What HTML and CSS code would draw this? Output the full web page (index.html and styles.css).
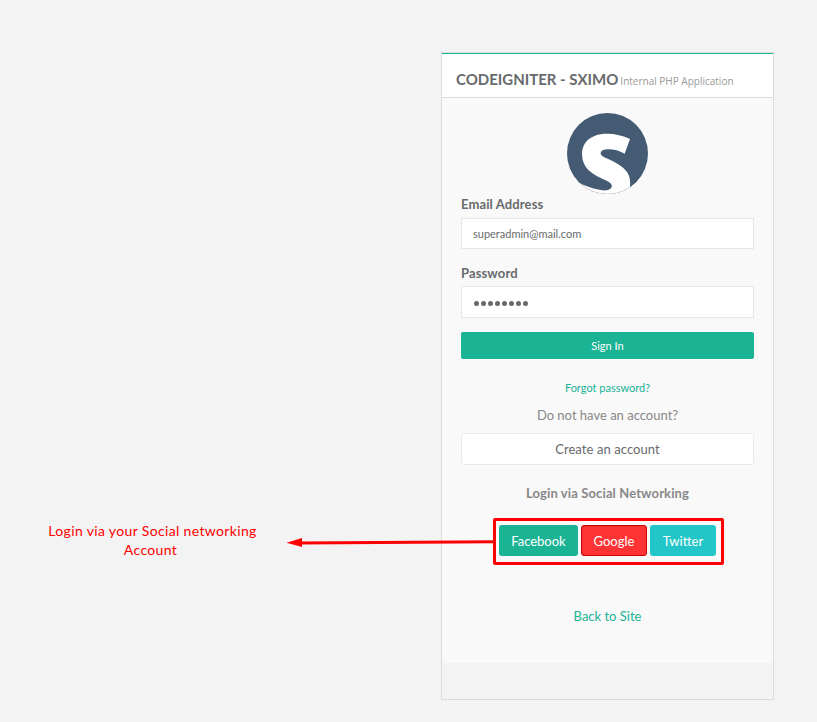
FILE: index.html
```html
<!DOCTYPE html>
<html lang="en">
<head>
<meta charset="utf-8">
<title>Codeigniter - Sximo</title>
<link rel="stylesheet" href="styles.css">
</head>
<body>
<p class="note">Login via your Social networking<br><span class="note-end">Account</span></p>
<main class="card">
  <header class="card-head"><h1>CODEIGNITER - SXIMO</h1><small>Internal PHP Application</small></header>
  <form class="card-body">
    <svg class="logo" viewBox="36 24 243 243">
      <defs><clipPath id="disc"><circle cx="157.500" cy="145.500" r="121.500"/></clipPath></defs>
      <circle cx="157.500" cy="145.500" r="121.500" fill="#445b73"/>
      <path clip-path="url(#disc)" fill="#fff" d="M225 102C193 86 150 81 120 92C94 102 81 122 81 148C81 184 105 205 139 220C164 231 172 236 170 246C166 258 146 258 126 253C108 249 92 243 75 235L100 275L225 275L225 243C229 207 211 188 174 169C151 158 137 154 137 145C137 130 164 131 182 135C193 138 201 142 209 146Z"/>
      <path fill="none" stroke="#ccc" stroke-width="2" stroke-dasharray="12 5" d="M77 237A121.500 121.500 0 0 0 224 247"/>
    </svg>
    <label class="label"><span>Email Address</span></label>
    <div class="field"><span>superadmin@mail.com</span></div>
    <label class="label label-pass"><span>Password</span></label>
    <div class="field field-pass"><i></i><i></i><i></i><i></i><i></i><i></i><i></i><i></i></div>
    <div class="signin"><span>Sign In</span></div>
    <a class="forgot"><span>Forgot password?</span></a>
    <p class="ask"><span>Do not have an account?</span></p>
    <div class="create"><span>Create an account</span></div>
    <p class="via"><span>Login via Social Networking</span></p>
    <div class="social">
      <div class="btn facebook">Facebook</div>
      <div class="btn google">Google</div>
      <div class="btn twitter">Twitter</div>
    </div>
    <a class="back"><span>Back to Site</span></a>
  </form>
</main>
<svg class="arrow" width="210" height="12" viewBox="286 537 210 12">
  <path d="M300 543L495 541.800" stroke="#f00" stroke-width="3"/>
  <path d="M286.500 542.700L302 538V547Z" fill="#f00"/>
</svg>
</body>
</html>
```

FILE: styles.css
```css
* { box-sizing: border-box; }
body {
  margin: 0;
  height: 722px;
  overflow: hidden;
  position: relative;
  display: flex;
  align-items: flex-start;
  background: #f3f3f3;
  font-family: Lato, sans-serif;
  font-size: 13px;
  color: #676a6c;
}
p, h1 { margin: 0; }
span { white-space: nowrap; }
.note {
  width: 305px;
  margin: 521px 136px 0 0;
  text-align: center;
  white-space: nowrap;
  font-size: 14px;
  line-height: 19px;
  letter-spacing: 0.35px;
  color: #f00;
}
.note-end { margin-right: 4px; }
.card {
  width: 333px;
  height: 648px;
  margin-top: 52px;
  border: 1px solid #dcdcdc;
}
.card-head {
  height: 45px;
  padding: 15px 0 0 14px;
  display: flex;
  align-items: baseline;
  gap: 2px;
  white-space: nowrap;
  background: #fff;
  border-top: 1px solid #1ab394;
  border-bottom: 1px solid #dcdcdc;
}
h1 { font-size: 15px; line-height: 20px; font-weight: 700; }
small { font-family: "Open Sans", sans-serif; font-size: 10px; color: #999; }
.card-body {
  height: 565px;
  padding: 15px 19px 0;
  display: flex;
  flex-direction: column;
  align-items: stretch;
  background: #f9f9f9;
  text-align: center;
}
.logo { width: 81px; height: 81px; align-self: center; display: block; }
.label { margin-top: 2px; height: 16px; line-height: 16px; margin-bottom: 6px; text-align: left; font-weight: 700; letter-spacing: 0.12px; }
.label-pass { margin-top: 16px; margin-bottom: 5px; }
.field {
  height: 31px;
  padding-left: 11px;
  border: 1px solid #e5e6e7;
  background: #fff;
  display: flex;
  align-items: center;
  font-size: 11px;
}
.field-pass { height: 32px; gap: 2px; padding: 3px 0 0 12px; }
.field-pass i { width: 5px; height: 5px; border-radius: 50%; background: #676a6c; }
.signin { margin-top: 14px; height: 27px; line-height: 27px; border-radius: 2px; background: #1ab394; color: #fff; font-size: 11px; }
.forgot { margin-top: 21px; height: 16px; line-height: 16px; color: #1ab394; font-size: 11px; }
.ask { margin-top: 10px; height: 18px; line-height: 18px; color: #888; }
.create { margin-top: 9px; height: 32px; line-height: 31px; border: 1px solid #e7eaec; border-radius: 3px; background: #fff; letter-spacing: 0.08px; }
.via { margin-top: 19px; height: 18px; line-height: 18px; color: #888; font-weight: 700; letter-spacing: 0.12px; }
.social {
  margin: 16px 30px 0 32px;
  height: 47px;
  border: 3px solid #f00;
  border-radius: 2px;
  display: flex;
  align-items: flex-start;
  gap: 3px;
  padding: 4px 0 0 3px;
}
.btn { height: 31px; line-height: 32px; border-radius: 3px; color: #fff; }
.facebook { width: 79px; background: #1ab394; }
.google { width: 66px; line-height: 30px; background: #f33; border: 1px solid #c00; }
.twitter { width: 66px; background: #23c6c8; }
.back { margin-top: 42px; height: 18px; line-height: 18px; color: #1ab394; }
.arrow { position: absolute; left: 286px; top: 537px; }
```
